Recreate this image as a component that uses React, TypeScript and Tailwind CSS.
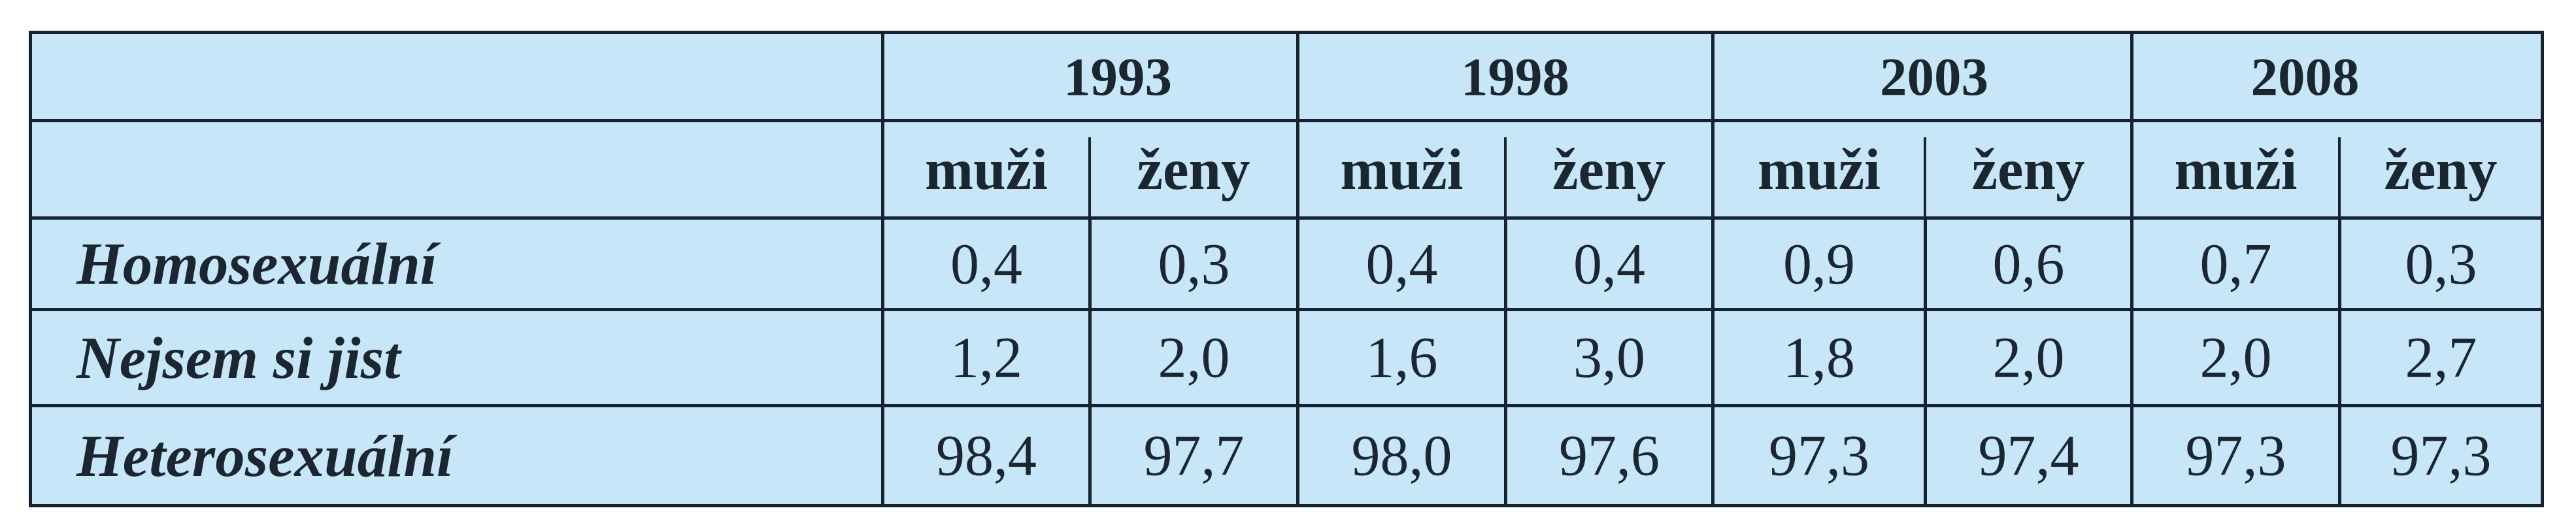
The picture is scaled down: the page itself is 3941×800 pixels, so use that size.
import { Fragment } from 'react';

const years = [
  { year: '1993', shift: 'pl-[84px]', left: 'w-[312px]' },
  { year: '1998', shift: 'pl-[30px]', left: 'w-[313px]' },
  { year: '2003', shift: 'pl-[36px]', left: 'w-[320px]' },
  { year: '2008', shift: 'pr-[98px]', left: 'w-[313px]' },
];

const rows = [
  { label: 'Homosexuální', values: ['0,4', '0,3', '0,4', '0,4', '0,9', '0,6', '0,7', '0,3'] },
  { label: 'Nejsem si jist', values: ['1,2', '2,0', '1,6', '3,0', '1,8', '2,0', '2,0', '2,7'] },
  { label: 'Heterosexuální', values: ['98,4', '97,7', '98,0', '97,6', '97,3', '97,4', '97,3', '97,3'] },
];

const cell = 'bg-[#c7e7f8] flex items-center justify-center';

export default function App() {
  return (
    <div className="min-h-[800px] bg-white pt-[47px] pl-[44px] font-['Liberation_Serif',serif] text-[#1b2631] leading-none">
      <div className="grid w-[3848px] grid-cols-[1299px_312px_313px_313px_312px_320px_311px_313px_305px] grid-rows-[130px_144px_135px_142px_148px] gap-[5px] bg-[#16232f] p-[5px]">
        {/* year header */}
        <div className="bg-[#c7e7f8]" />
        {years.map((y) => (
          <div key={y.year} className={`${cell} col-span-2 ${y.shift}`}>
            <span className="text-[83px] font-bold">{y.year}</span>
          </div>
        ))}

        {/* sex header */}
        <div className="bg-[#c7e7f8]" />
        {years.map((y) => (
          <div key={y.year} className="col-span-2 flex bg-[#c7e7f8]">
            <div className={`${y.left} flex items-center justify-center`}>
              <span className="text-[89px] font-bold">muži</span>
            </div>
            <div className="mt-[23px] w-[4px] bg-[#16232f]" />
            <div className="flex flex-1 items-center justify-center">
              <span className="text-[89px] font-bold">ženy</span>
            </div>
          </div>
        ))}

        {rows.map((row) => (
          <Fragment key={row.label}>
            <div className="flex items-center bg-[#c7e7f8] pl-[68px]">
              <span className="text-[91px] font-bold italic">{row.label}</span>
            </div>
            {row.values.map((v, i) => (
              <div key={i} className={cell}>
                <span className="text-[88px]">{v}</span>
              </div>
            ))}
          </Fragment>
        ))}
      </div>
    </div>
  );
}
